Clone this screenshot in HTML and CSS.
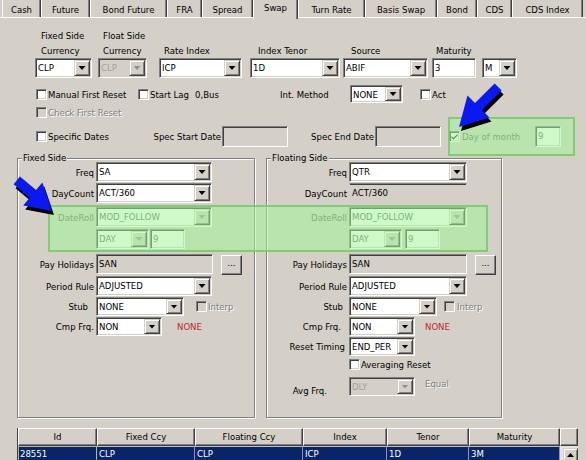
FILE: index.html
```html
<!DOCTYPE html>
<html>
<head>
<meta charset="utf-8">
<link rel="stylesheet" href="styles.css">
</head>
<body>
<div class="tabs">
  <div class="tab">Cash</div><div class="tab">Future</div><div class="tab">Bond Future</div><div class="tab">FRA</div><div class="tab">Spread</div><div class="tab active">Swap</div><div class="tab">Turn Rate</div><div class="tab">Basis Swap</div><div class="tab">Bond</div><div class="tab">CDS</div><div class="tab">CDS Index</div>
</div>

<div class="hdr">
  <div class="col c1"><div class="lbl">Fixed Side</div><div class="lbl">Currency</div><div class="combo"><span class="val">CLP</span><span class="btn"></span></div></div>
  <div class="col c2"><div class="lbl">Float Side</div><div class="lbl">Currency</div><div class="combo dis"><span class="val">CLP</span><span class="btn"></span></div></div>
  <div class="col c3"><div class="lbl"></div><div class="lbl">Rate Index</div><div class="combo"><span class="val">ICP</span><span class="btn"></span></div></div>
  <div class="col c4"><div class="lbl"></div><div class="lbl">Index Tenor</div><div class="combo"><span class="val">1D</span><span class="btn"></span></div></div>
  <div class="col c5"><div class="lbl"></div><div class="lbl">Source</div><div class="combo"><span class="val">ABIF</span><span class="btn"></span></div></div>
  <div class="col c6"><div class="lbl"></div><div class="lbl">Maturity</div><div class="tb"><span class="val">3</span></div></div>
  <div class="col c7"><div class="lbl"></div><div class="lbl"></div><div class="combo"><span class="val">M</span><span class="btn"></span></div></div>
</div>

<div class="opts opts-1">
  <div class="chk w102"><span class="cb"></span><span>Manual First Reset</span></div>
  <div class="chk w57"><span class="cb"></span><span>Start Lag</span></div>
  <div class="txt w85">0,Bus</div>
  <div class="txt w70">Int. Method</div>
  <div class="combo h18 w53"><span class="val">NONE</span><span class="btn"></span></div>
  <div class="chk ml17"><span class="cb"></span><span>Act</span></div>
</div>

<div class="opts opts-2">
  <div class="chk"><span class="cb dis"></span><span class="dtext">Check First Reset</span></div>
</div>

<div class="opts opts-3">
  <div class="chk w117"><span class="cb"></span><span>Specific Dates</span></div>
  <div class="txt w69 right">Spec Start Date</div>
  <div class="tb ro h21 w66"></div>
  <div class="txt w87 right">Spec End Date</div>
  <div class="tb ro h21 w66"></div>
  <span class="cb ml8 on"><svg viewBox="0 0 7 7" width="7" height="7"><path d="M0.5 3 L2.5 5 L6.5 1 L6.5 2.6 L2.5 6.6 L0.5 4.6 Z" fill="#000"/></svg></span>
  <div class="txt w73 ml2 soft">Day of month</div>
  <div class="tb h21 w26"><span class="val soft">9</span></div>
</div>

<div class="groups">
  <div class="group g-fixed">
    <div class="g-title">Fixed Side</div>
    <div class="frow"><div class="fl">Freq</div><div class="combo w116"><span class="val">SA</span><span class="btn"></span></div></div>
    <div class="frow"><div class="fl">DayCount</div><div class="combo w116"><span class="val">ACT/360</span><span class="btn"></span></div></div>
    <div class="frow mt4"><div class="fl soft">DateRoll</div><div class="combo dim w116"><span class="val">MOD_FOLLOW</span><span class="btn"></span></div></div>
    <div class="frow mt2"><div class="fl"></div><div class="combo dim w53"><span class="val">DAY</span><span class="btn"></span></div><div class="tb dim w35 ml1"><span class="val">9</span></div></div>
    <div class="frow frow-ph"><div class="fl">Pay Holidays</div><div class="tb ro w117"><span class="val">SAN</span></div><div class="dots ml8">...</div></div>
    <div class="frow"><div class="fl">Period Rule</div><div class="combo w116"><span class="val">ADJUSTED</span><span class="btn"></span></div></div>
    <div class="frow h19"><div class="fl pr6">Stub</div><div class="combo h19 w88"><span class="val">NONE</span><span class="btn"></span></div><span class="cb dis ml12"></span><span class="dtext ml1">Interp</span></div>
    <div class="frow h19"><div class="fl">Cmp Frq.</div><div class="combo h19 w66"><span class="val">NON</span><span class="btn"></span></div><span class="red ml15">NONE</span></div>
  </div>

  <div class="group g-float">
    <div class="g-title">Floating Side</div>
    <div class="frow"><div class="fl">Freq</div><div class="combo w118"><span class="val">QTR</span><span class="btn"></span></div></div>
    <div class="frow"><div class="fl">DayCount</div><div class="tb ro flat w118"><span class="val">ACT/360</span></div></div>
    <div class="frow mt4"><div class="fl soft">DateRoll</div><div class="combo dim w118"><span class="val">MOD_FOLLOW</span><span class="btn"></span></div></div>
    <div class="frow mt2"><div class="fl"></div><div class="combo dim w53"><span class="val">DAY</span><span class="btn"></span></div><div class="tb dim w35 ml3"><span class="val">9</span></div></div>
    <div class="frow frow-ph"><div class="fl">Pay Holidays</div><div class="tb ro w118"><span class="val">SAN</span></div><div class="dots ml8">...</div></div>
    <div class="frow"><div class="fl">Period Rule</div><div class="combo w118"><span class="val">ADJUSTED</span><span class="btn"></span></div></div>
    <div class="frow h19"><div class="fl pr4">Stub</div><div class="combo h19 w88"><span class="val">NONE</span><span class="btn"></span></div><span class="cb dis ml7"></span><span class="dtext ml2">Interp</span></div>
    <div class="frow h19"><div class="fl pr6">Cmp Frq.</div><div class="combo h19 w66"><span class="val">NON</span><span class="btn"></span></div><span class="red ml10">NONE</span></div>
    <div class="frow h19"><div class="fl pr2">Reset Timing</div><div class="combo h19 w66"><span class="val">END_PER</span><span class="btn"></span></div></div>
    <div class="frow h13 mt2"><div class="fl"></div><span class="cb"></span><span class="ml1">Averaging Reset</span></div>
    <div class="frow h19 mt6"><div class="fl pr20 low">Avg Frq.</div><div class="combo dis h19 w66"><span class="val">DLY</span><span class="btn"></span></div><span class="dtext ml10 up">Equal</span></div>
  </div>
</div>

<div class="grid">
  <div class="ghead">
    <div class="gh g1">Id</div><div class="gh g2">Fixed Ccy</div><div class="gh g3">Floating Ccy</div><div class="gh g4">Index</div><div class="gh g5">Tenor</div><div class="gh g6">Maturity</div><div class="gh gfill"></div>
  </div>
  <div class="grow">
    <div class="gc g1 focus">28551</div><div class="gc g2">CLP</div><div class="gc g3">CLP</div><div class="gc g4">ICP</div><div class="gc g5">1D</div><div class="gc g6">3M</div>
    <div class="sb"><div class="sb-btn"></div></div>
  </div>
</div>

<div class="hl hl-1"></div>
<div class="hl hl-2"></div>

<svg class="arrows" width="586" height="460" viewBox="0 0 586 460">
  <g transform="translate(2,4)" fill="#000">
    <polygon points="459,127 467.5,95.5 475,103 494.6,83.4 501.6,90.4 482,110 489.5,117.5"/>
    <polygon points="52,211 42.4,182.4 36,190.1 20,176.6 13.6,184.2 29.6,197.7 23.2,205.4"/>
  </g>
  <g fill="#0a18f2">
    <polygon points="459,127 467.5,95.5 475,103 494.6,83.4 501.6,90.4 482,110 489.5,117.5"/>
    <polygon points="52,211 42.4,182.4 36,190.1 20,176.6 13.6,184.2 29.6,197.7 23.2,205.4"/>
  </g>
</svg>
</body>
</html>
```

FILE: styles.css
```css
* { box-sizing: border-box; }
html, body { margin: 0; }
body {
  position: relative;
  width: 586px;
  height: 460px;
  overflow: hidden;
  background: #d4d0c8;
  color: #000;
  font-family: "DejaVu Sans Condensed", "Liberation Sans", sans-serif;
  font-size: 9.5px;
}

/* ---------- tabs ---------- */
.tabs {
  display: flex;
  height: 18px;
  padding-left: 2px;
  border-bottom: 1px solid #fff;
}
.tab {
  flex: none;
  height: 17px;
  line-height: 19px;
  text-align: center;
  white-space: nowrap;
  border-left: 1px solid #fff;
  border-right: 1px solid #404040;
  box-shadow: inset -1px 0 0 #808080;
}
.tab.active {
  position: relative;
  z-index: 1;
  height: 19px;
  line-height: 15px;
  background: #d4d0c8;
}
.tab:nth-child(1) { width: 39px; }
.tab:nth-child(2) { width: 49px; }
.tab:nth-child(3) { width: 77px; }
.tab:nth-child(4) { width: 35px; }
.tab:nth-child(5) { width: 51px; }
.tab:nth-child(6) { width: 45px; }
.tab:nth-child(7) { width: 67px; }
.tab:nth-child(8) { width: 72px; }
.tab:nth-child(9) { width: 40px; }
.tab:nth-child(10) { width: 35px; }
.tab:nth-child(11) { width: 71px; }

/* ---------- controls ---------- */
.combo, .tb {
  flex: none;
  display: flex;
  height: 20px;
  padding: 1px;
  background: #fff;
  border: 1px solid;
  border-color: #808080 #fff #fff #808080;
  box-shadow: inset 1px 1px 0 #404040, inset -1px -1px 0 #d4d0c8;
}
.val {
  flex: 1;
  min-width: 0;
  padding-left: 1px;
  line-height: 16px;
  white-space: nowrap;
  overflow: hidden;
}
.h18 .val, .h19 .val { line-height: 15px; }
.btn {
  flex: none;
  width: 16px;
  display: flex;
  align-items: center;
  justify-content: center;
  background: #d4d0c8;
  border: 1px solid;
  border-color: #d4d0c8 #404040 #404040 #d4d0c8;
  box-shadow: inset 1px 1px 0 #fff, inset -1px -1px 0 #808080;
}
.btn::after {
  content: "";
  width: 7px;
  height: 4px;
  background: #000;
  clip-path: polygon(0 0, 100% 0, 50% 100%);
}
.dis { background: #d4d0c8; }
.dis .val { color: #a0a0a0; }
.dis .btn::after, .dim .btn::after { background: #909090; }
.dim .val { color: #606060; }
.ro { background: #d4d0c8; }
.flat { border-color: #808080 #d4d0c8 #d4d0c8 #d4d0c8; box-shadow: inset 0 1px 0 #404040; }

.combo.h18 { height: 18px; }
.combo.h19 { height: 19px; }
.tb.h21 { height: 21px; }

.cb {
  flex: none;
  display: flex;
  align-items: center;
  justify-content: center;
  width: 11px;
  height: 11px;
  background: #fff;
  border: 1px solid;
  border-color: #808080 #fff #fff #808080;
  box-shadow: inset 1px 1px 0 #404040, inset -1px -1px 0 #d4d0c8;
}
.cb.dis { background: #d4d0c8; }
.cb svg { display: block; }

.dtext { color: #808080; text-shadow: 1px 1px 0 #fff; white-space: nowrap; }
.soft { color: #606060; }
.red { color: #c0282d; }

.dots {
  flex: none;
  width: 21px;
  height: 20px;
  margin-top: 1px;
  line-height: 14px;
  text-align: center;
  background: #d4d0c8;
  border: 1px solid;
  border-color: #fff #404040 #404040 #fff;
  box-shadow: inset -1px -1px 0 #808080;
}

/* ---------- sizes & spacing ---------- */
.w26 { width: 26px; }
.w35 { width: 35px; }
.w53 { width: 53px; }
.w57 { width: 57px; }
.w66 { width: 66px; }
.w69 { width: 69px; }
.w70 { width: 70px; }
.w73 { width: 73px; }
.w85 { width: 85px; }
.w87 { width: 87px; }
.w88 { width: 88px; }
.w102 { width: 102px; }
.w116 { width: 116px; }
.w117 { width: 117px; }
.w118 { width: 118px; }
.ml1 { margin-left: 1px; }
.ml2 { margin-left: 2px; }
.ml3 { margin-left: 3px; }
.ml7 { margin-left: 7px; }
.ml8 { margin-left: 8px; }
.ml10 { margin-left: 10px; }
.ml12 { margin-left: 12px; }
.ml15 { margin-left: 15px; }
.ml17 { margin-left: 17px; }
.right { text-align: right; padding-right: 1px; }

/* ---------- top header block ---------- */
.hdr {
  display: flex;
  margin-top: 12px;
  padding-left: 35px;
}
.col { display: flex; flex-direction: column; flex: none; }
.col .lbl { height: 12px; line-height: 12px; white-space: nowrap; }
.col .lbl + .lbl { margin-top: 3px; }
.col .combo, .col .tb { margin-top: 1px; }
.c1 { width: 57px; }
.c1 .lbl { padding-left: 6px; }
.c2 { width: 49px; margin-left: 6px; }
.c2 .lbl { padding-left: 5px; }
.c3 { width: 83px; margin-left: 12px; }
.c3 .lbl { padding-left: 5px; }
.c4 { width: 90px; margin-left: 8px; }
.c4 .lbl { padding-left: 8px; }
.c5 { width: 85px; margin-left: 3px; }
.c5 .lbl { padding-left: 8px; }
.c6 { width: 44px; margin-left: 4px; }
.c6 .lbl { padding-left: 4px; }
.c7 { width: 35px; margin-left: 6px; }

.opts {
  display: flex;
  align-items: center;
  padding-left: 36px;
}
.opts-1 { height: 18px; margin-top: 7px; }
.opts-2 { height: 12px; margin-top: 3px; }
.opts-3 { height: 21px; margin-top: 8px; }
.chk { display: flex; align-items: center; gap: 1px; flex: none; white-space: nowrap; }
.txt { flex: none; white-space: nowrap; }

/* ---------- group boxes ---------- */
.groups {
  display: flex;
  gap: 11px;
  margin-top: 11px;
  padding-left: 17px;
}
.group {
  position: relative;
  height: 260px;
  padding-top: 3px;
  border: 1px solid #808080;
  box-shadow: inset 1px 1px 0 #fff, 1px 1px 0 #fff;
}
.g-fixed { width: 238px; }
.g-float { width: 236px; }
.g-title {
  position: absolute;
  top: -7px;
  left: 4px;
  padding: 0 1px;
  line-height: 12px;
  background: #d4d0c8;
}
.frow {
  display: flex;
  align-items: center;
  height: 20px;
  margin-top: 1px;
  white-space: nowrap;
}
.g-title + .frow { margin-top: 0; }
.frow.h19 { height: 19px; }
.frow.h13 { height: 13px; }
.frow.mt2 { margin-top: 2px; }
.frow.mt4 { margin-top: 4px; }
.frow.mt6 { margin-top: 6px; }
.frow.frow-ph { height: 21px; align-items: flex-start; margin-top: 5px; }
.frow-ph .fl { line-height: 21px; }
.fl {
  flex: none;
  margin-right: 2px;
  text-align: right;
  white-space: nowrap;
}
.g-fixed .fl { width: 76px; }
.g-float .fl { width: 80px; }
.pr2 { padding-right: 2px; }
.pr4 { padding-right: 4px; }
.pr6 { padding-right: 6px; }
.pr20 { padding-right: 20px; }
.low { align-self: flex-end; line-height: 12px; margin-bottom: -1px; }
.up { align-self: flex-start; line-height: 13px; }

/* ---------- grid ---------- */
.grid {
  width: 561px;
  margin: 10px 0 0 17px;
  border-left: 1px solid #404040;
}
.ghead, .grow { display: flex; }
.gh {
  flex: none;
  height: 18px;
  line-height: 16px;
  text-align: center;
  background: #d4d0c8;
  border: 1px solid;
  border-color: #fff #404040 #404040 #fff;
  box-shadow: inset -1px -1px 0 #808080;
}
.g1 { width: 79px; }
.g2 { width: 98px; }
.g3 { width: 108px; }
.g4 { width: 84px; }
.g5 { width: 82px; }
.g6 { width: 91px; }
.gfill { width: 18px; }
.gc {
  flex: none;
  height: 16px;
  padding-left: 2px;
  line-height: 13px;
  color: #fff;
  background: #0a246a;
  border-right: 1px solid #8d94b4;
  border-top: 1px solid #c0c0c0;
  white-space: nowrap;
}
.gc.focus { border: 1px solid #b8b884; padding-left: 1px; }
.sb {
  flex: none;
  width: 18px;
  height: 16px;
  padding: 2px 0 0 3px;
  background: #e6e4e0;
}
.sb-btn {
  width: 15px;
  height: 14px;
  display: flex;
  align-items: center;
  justify-content: center;
  background: #d4d0c8;
  border: 1px solid;
  border-color: #d4d0c8 #404040 #404040 #d4d0c8;
  box-shadow: inset 1px 1px 0 #fff, inset -1px -1px 0 #808080;
}
.sb-btn::after {
  content: "";
  width: 7px;
  height: 4px;
  background: #000;
  clip-path: polygon(50% 0, 100% 100%, 0 100%);
}

/* ---------- annotation overlays ---------- */
.hl {
  position: absolute;
  pointer-events: none;
  background: rgba(161, 246, 152, 0.53);
  border: 2px solid rgba(110, 196, 100, 0.75);
}
.hl-1 { left: 448px; top: 117px; width: 127px; height: 39px; }
.hl-2 { left: 48px; top: 205px; width: 440px; height: 47px; }
.arrows {
  position: absolute;
  left: 0;
  top: 0;
  pointer-events: none;
}
```
